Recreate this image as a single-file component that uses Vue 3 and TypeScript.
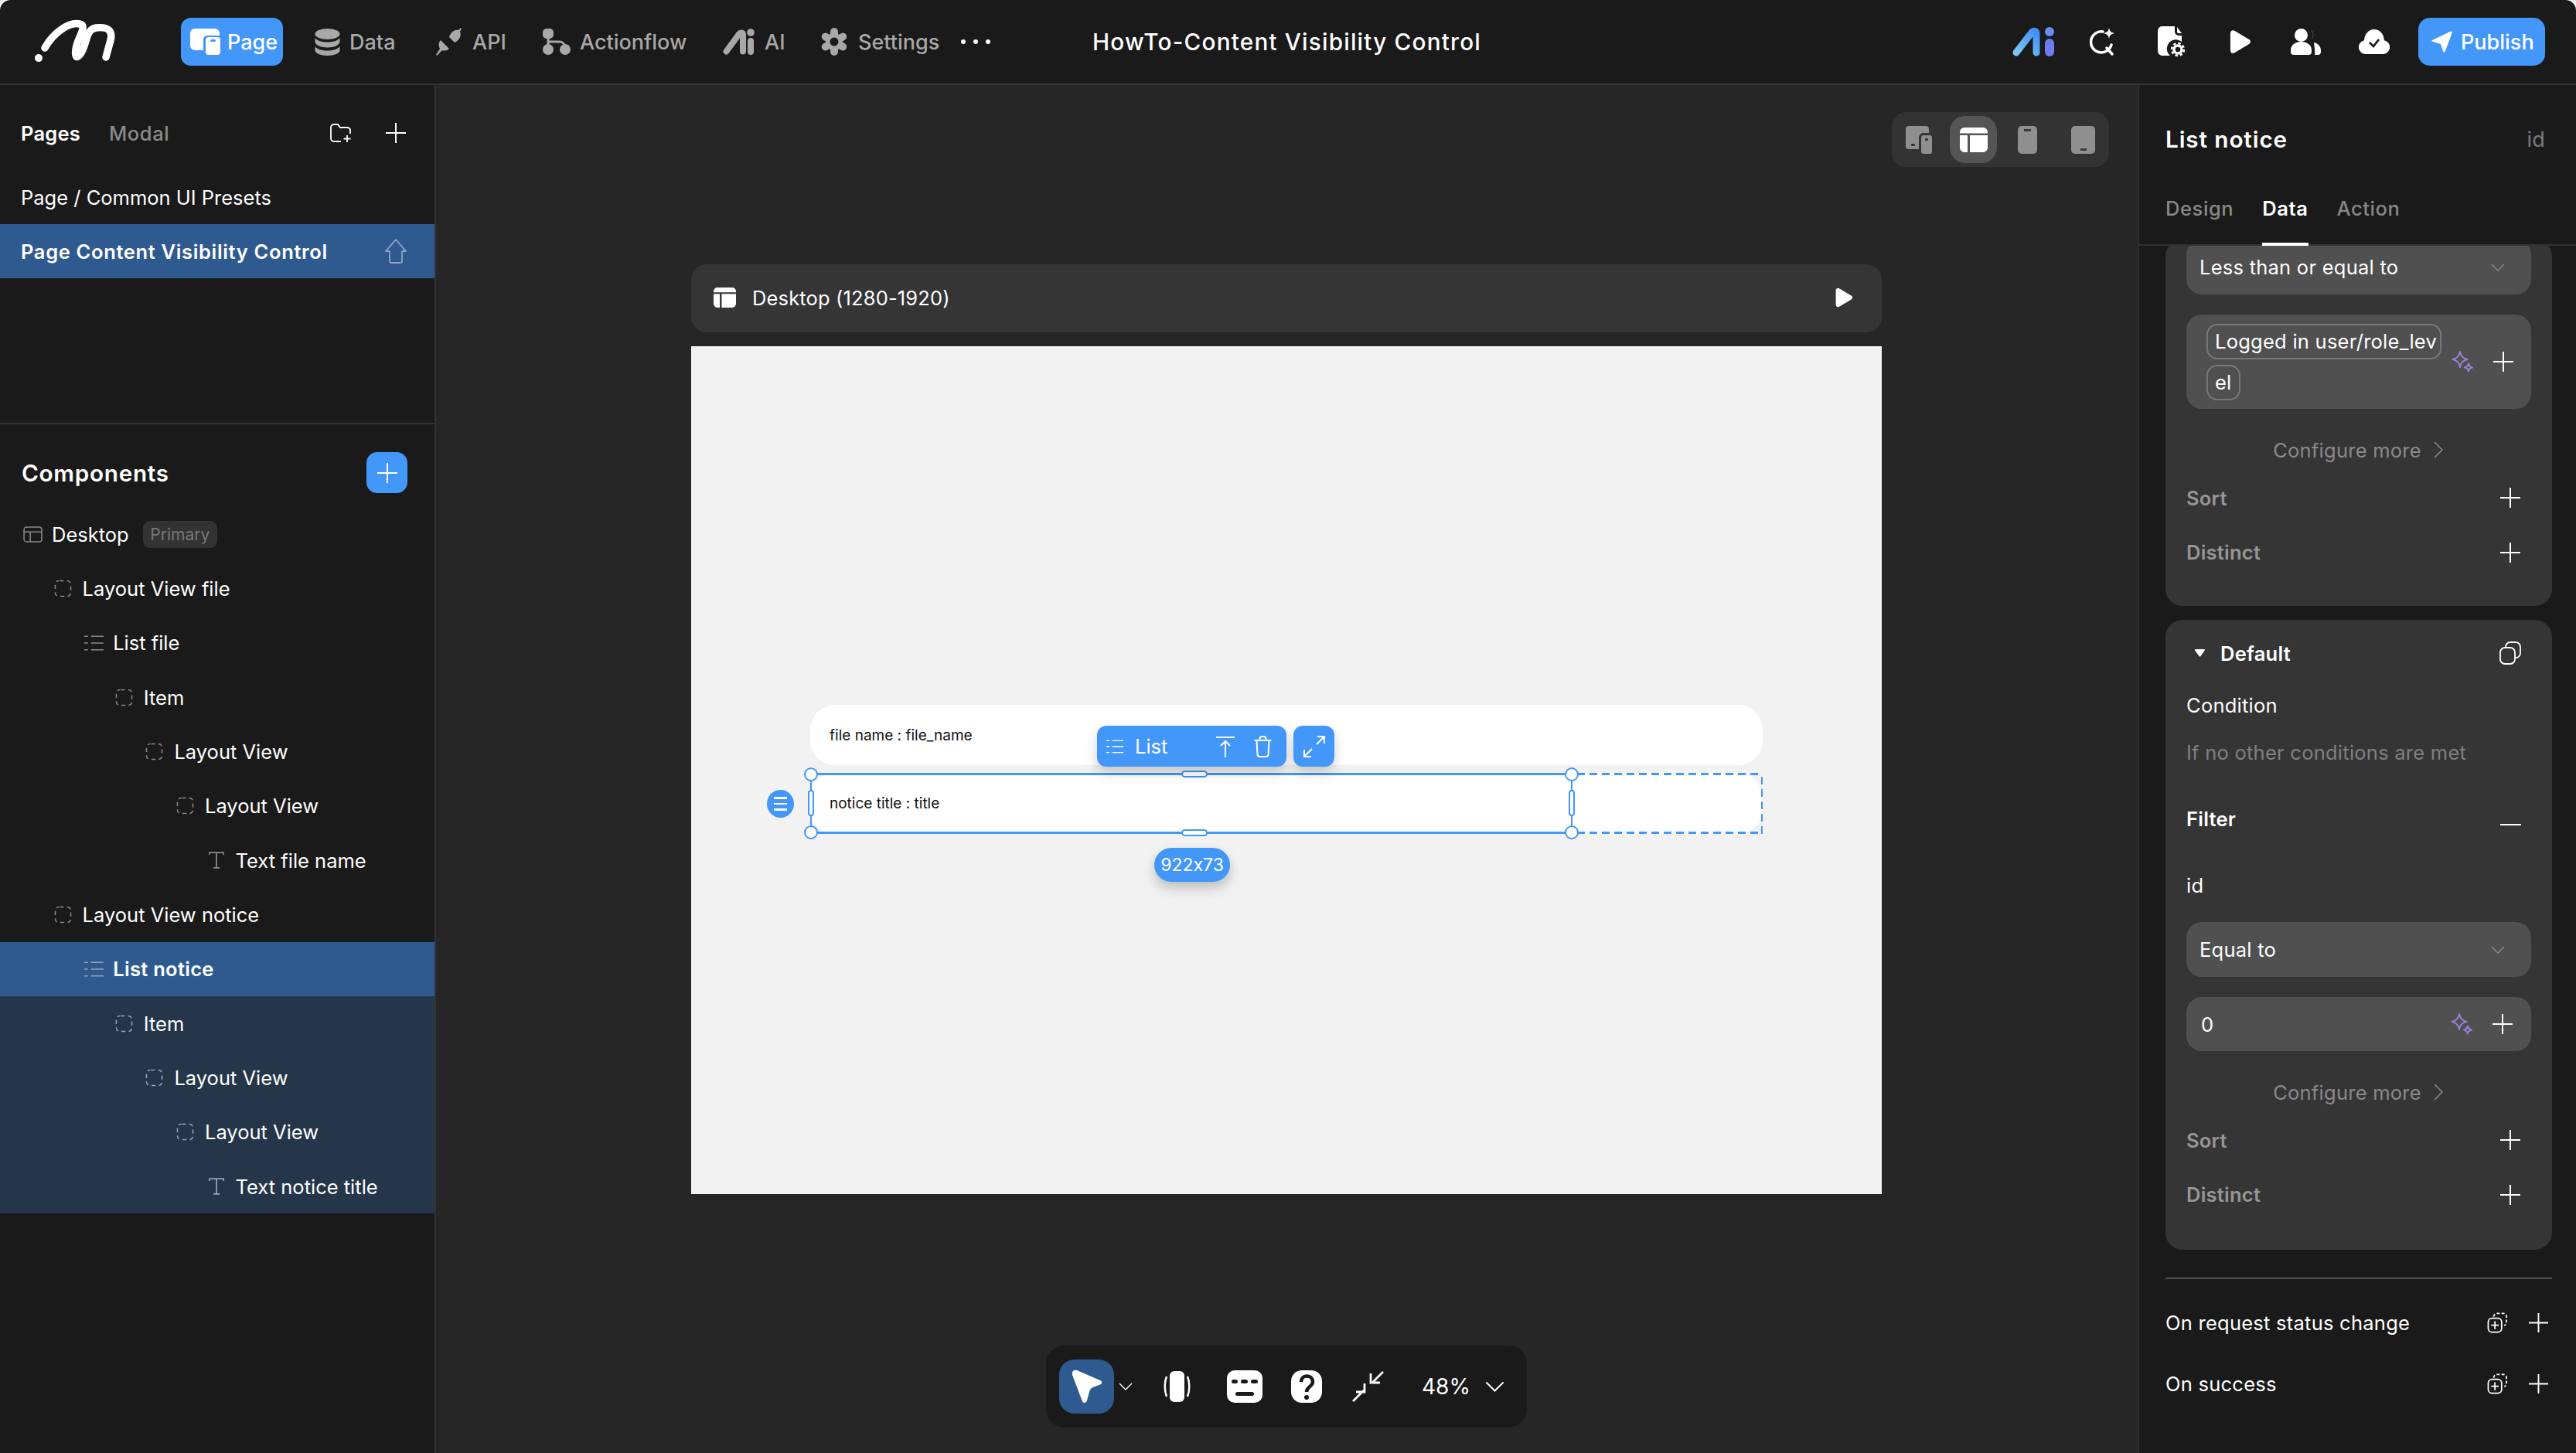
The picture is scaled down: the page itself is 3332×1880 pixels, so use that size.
<script setup lang="ts">
interface Node { label: string; level: number; icon: string; tone?: string; badge?: string }
const tree: Node[] = [
  { label: 'Desktop', level: 0, icon: 'i-frame', badge: 'Primary' },
  { label: 'Layout View file', level: 1, icon: 'i-dash' },
  { label: 'List file', level: 2, icon: 'i-list' },
  { label: 'Item', level: 3, icon: 'i-dash' },
  { label: 'Layout View', level: 4, icon: 'i-dash' },
  { label: 'Layout View', level: 5, icon: 'i-dash' },
  { label: 'Text file name', level: 6, icon: 'i-text' },
  { label: 'Layout View notice', level: 1, icon: 'i-dash' },
  { label: 'List notice', level: 2, icon: 'i-list', tone: 'active' },
  { label: 'Item', level: 3, icon: 'i-dash', tone: 'child' },
  { label: 'Layout View', level: 4, icon: 'i-dash', tone: 'child' },
  { label: 'Layout View', level: 5, icon: 'i-dash', tone: 'child' },
  { label: 'Text notice title', level: 6, icon: 'i-text', tone: 'child' },
]
const indent = (level: number) => ({ paddingLeft: `${30 + level * 39.6}px` })
</script>

<template>
  <div class="app">
    <svg class="sprite" aria-hidden="true">
      <defs>
        <linearGradient id="ai-a" gradientUnits="userSpaceOnUse" x1="5" y1="33" x2="31" y2="5">
          <stop offset="0" stop-color="#7cc8fb" />
          <stop offset="1" stop-color="#3f8ef0" />
        </linearGradient>
      </defs>
      <symbol id="i-dash" viewBox="0 0 24 24">
        <rect x="1.5" y="1.5" width="21" height="21" rx="5" fill="none" stroke="currentColor" stroke-width="1.6" stroke-dasharray="5.5 4.5" stroke-dashoffset="-1" />
      </symbol>
      <symbol id="i-list" viewBox="0 0 26 22">
        <path d="M0 2h5M9 2h17M0 11h5M9 11h17M0 20h5M9 20h17" fill="none" stroke="currentColor" stroke-width="1.6" />
      </symbol>
      <symbol id="i-text" viewBox="0 0 20 22">
        <path d="M1 4V1.2h18V4M10 1.2v19.6M6 20.8h8" fill="none" stroke="currentColor" stroke-width="1.8" />
      </symbol>
      <symbol id="i-frame" viewBox="0 0 26 22">
        <rect x="1" y="1" width="24" height="20" rx="3.5" fill="none" stroke="currentColor" stroke-width="1.6" />
        <path d="M1 7.5h24M9.5 7.5V21" fill="none" stroke="currentColor" stroke-width="1.6" />
      </symbol>
      <symbol id="i-plus" viewBox="0 0 28 28">
        <path d="M14 1v26M1 14h26" fill="none" stroke="currentColor" stroke-width="2" />
      </symbol>
      <symbol id="i-chev" viewBox="0 0 18 10">
        <path d="M1 1l8 8 8-8" fill="none" stroke="currentColor" stroke-width="1.4" />
      </symbol>
      <symbol id="i-right" viewBox="0 0 12 22">
        <path d="M1 1l10 10L1 21" fill="none" stroke="currentColor" stroke-width="1.5" />
      </symbol>
      <symbol id="i-spark" viewBox="0 0 28 28">
        <path d="M11 1c1.200 6 3.500 8.800 9.500 10-6 1.200-8.300 4-9.500 10-1.200-6-3.500-8.800-9.500-10C7.500 9.800 9.800 7 11 1z" fill="none" stroke="#9a80d6" stroke-width="2" stroke-linejoin="round" />
        <path d="M22 16.500c.6 3 1.800 4.300 5 5-3.200.7-4.400 2-5 5-.6-3-1.800-4.300-5-5 3.200-.7 4.400-2 5-5z" fill="none" stroke="#9a80d6" stroke-width="2" stroke-linejoin="round" />
      </symbol>
      <symbol id="i-addgroup" viewBox="0 0 28 28">
        <path d="M9 6V5.500A4 4 0 0 1 13 1.500h9a4 4 0 0 1 4 4v8a4 4 0 0 1-3 4" fill="none" stroke="currentColor" stroke-width="1.8" stroke-dasharray="4 2.500" />
        <rect x="1.500" y="8" width="18" height="18.500" rx="5" fill="none" stroke="currentColor" stroke-width="1.8" />
        <path d="M10.500 12v10.500M5.500 17.200h10" fill="none" stroke="currentColor" stroke-width="1.8" />
      </symbol>
      <symbol id="i-desk-solid" viewBox="0 0 36 32">
        <path d="M6 0h24a6 6 0 0 1 6 6v1.500H0V6a6 6 0 0 1 6-6zM0 10h10v22H6a6 6 0 0 1-6-6zM13 10h23v16a6 6 0 0 1-6 6H13z" fill="currentColor" />
      </symbol>
      <symbol id="i-play" viewBox="0 0 30 32">
        <path d="M2 5c0-4 3-5.500 6-3.500l19 11.500c2.500 1.500 2.500 4.500 0 6L8 30.500c-3 2-6 .5-6-3.500z" fill="currentColor" />
      </symbol>
    </svg>

    <header class="top">
      <div class="brand">
        <svg width="106" height="60" viewBox="45 24 106 60">
          <path d="M50 75v.1" fill="none" stroke="#fff" stroke-width="10" stroke-linecap="round" />
          <path d="M58 62C68 44 88 28 103 31c10 2-1 16-4 28-3 12-1 19 5 11 9-12 6-32 20-34 16-2 22 4 19 16l-6 22" fill="none" stroke="#fff" stroke-width="9.500" stroke-linecap="round" />
        </svg>
      </div>
      <nav class="nav">
        <div class="nav-item page">
          <svg width="39" height="34" viewBox="0 0 39 34">
            <path d="M6 0h26a6 6 0 0 1 6 6v3H22a5 5 0 0 0-5 5v14H6a6 6 0 0 1-6-6V6a6 6 0 0 1 6-6z" fill="#fff" />
            <rect x="20" y="11" width="19" height="23" rx="4" fill="#fff" />
            <rect x="26" y="14" width="7" height="3" rx="1.500" fill="#4397f9" />
          </svg>
          <span>Page</span>
        </div>
        <div class="nav-item">
          <svg width="33" height="35" viewBox="0 0 33 35">
            <ellipse cx="16.500" cy="7" rx="16" ry="7" fill="currentColor" />
            <path d="M.5 12c3 4 9 5.500 16 5.500S29.500 16 32.500 12v5c0 4-7 7.500-16 7.500S.5 21 .5 17z" fill="currentColor" />
            <path d="M.5 23c3 4 9 5.500 16 5.500S29.500 27 32.500 23v5c0 4-7 7-16 7S.5 32 .5 28z" fill="currentColor" />
          </svg>
          <span>Data</span>
        </div>
        <div class="nav-item">
          <svg width="36" height="36" viewBox="0 0 36 36">
            <path d="M18 12C20 5 26 2 30 3l3-3 1 1-2 4c2 4 0 11-7 14z" fill="currentColor" />
            <path d="M7 16l11 11c-3 3-7 3-9 2l-7 7-1-1 5-8C4 23 4 19 7 16z" fill="currentColor" />
          </svg>
          <span>API</span>
        </div>
        <div class="nav-item">
          <svg width="36" height="34" viewBox="0 0 36 34">
            <rect x="0" y="0" width="14" height="13" rx="5" fill="currentColor" />
            <circle cx="7" cy="27" r="7" fill="currentColor" />
            <circle cx="29" cy="27" r="7" fill="currentColor" />
            <path d="M7 12v10M7 17h15a6 6 0 0 1 6 5" fill="none" stroke="currentColor" stroke-width="3" />
          </svg>
          <span>Actionflow</span>
        </div>
        <div class="nav-item">
          <svg width="42" height="34" viewBox="0 0 42 34">
            <path d="M4.500 29.500L21 7c2-2.500 5-2 5 1v21.500" fill="none" stroke="currentColor" stroke-width="8" stroke-linecap="round" stroke-linejoin="round" />
            <circle cx="36" cy="5" r="4.800" fill="currentColor" />
            <rect x="32" y="12" width="8" height="22" rx="4" fill="currentColor" />
          </svg>
          <span>AI</span>
        </div>
        <div class="nav-item">
          <svg width="38" height="38" viewBox="0 0 38 38">
            <g fill="none" stroke="currentColor" stroke-width="10" stroke-linecap="round">
              <path d="M19 6v26" />
              <path d="M19 6v26" transform="rotate(60 19 19)" />
              <path d="M19 6v26" transform="rotate(120 19 19)" />
            </g>
            <circle cx="19" cy="19" r="11" fill="currentColor" />
            <circle cx="19" cy="19" r="5.500" fill="#1a1a1a" />
          </svg>
          <span>Settings</span>
        </div>
        <div class="dots"><i></i><i></i><i></i></div>
      </nav>
      <h1 class="title">HowTo-Content Visibility Control</h1>
      <div class="actions">
        <svg width="56" height="38" viewBox="0 0 56 38">
          <path d="M5 33L25 7c2.500-3 6-2 6 1.500V33" fill="none" stroke="url(#ai-a)" stroke-width="9" stroke-linecap="round" stroke-linejoin="round" />
          <circle cx="48" cy="6" r="6" fill="#6a8df2" />
          <rect x="42" y="15" width="12" height="23" rx="6" fill="#6f7bf0" />
        </svg>
        <svg width="34" height="36" viewBox="0 0 34 36">
          <path d="M17 5A13.500 13.500 0 1 0 28 22" fill="none" stroke="#fff" stroke-width="3.500" stroke-linecap="round" />
          <path d="M22 26l7 8" fill="none" stroke="#fff" stroke-width="3.500" stroke-linecap="round" />
          <path d="M25 0c.8 4.500 2.500 6 7 7-4.500 1-6.200 2.500-7 7-.8-4.500-2.500-6-7-7 4.500-1 6.200-2.500 7-7z" fill="#fff" />
        </svg>
        <svg width="35" height="40" viewBox="0 0 35 40">
          <path d="M6 0h16v7a5 5 0 0 0 5 5h4v8a11 11 0 0 0-15 18H6a6 6 0 0 1-6-6V6a6 6 0 0 1 6-6z" fill="#fff" />
          <path d="M25 1l6 8h-4a2 2 0 0 1-2-2z" fill="#fff" />
          <circle cx="26" cy="30" r="5" fill="none" stroke="#fff" stroke-width="3.500" />
          <circle cx="26" cy="30" r="8" fill="none" stroke="#fff" stroke-width="2.500" stroke-dasharray="3.500 2.780" />
        </svg>
        <svg class="play" width="29" height="32"><use href="#i-play" /></svg>
        <svg width="39" height="34" viewBox="0 0 39 34">
          <circle cx="13.500" cy="8.500" r="8.500" fill="#fff" />
          <path d="M0 28c0-7 6-11 13.500-11S27 21 27 28v2a4 4 0 0 1-4 4H4a4 4 0 0 1-4-4z" fill="#fff" />
          <path d="M24 1a8 8 0 0 1 5 7.500 8 8 0 0 1-5 7.500 8 8 0 0 0 0-15zM30 18c5 1 9 5 9 10v2a4 4 0 0 1-4 4h-4a8 8 0 0 0 0-4v-3c0-3-1-7-1-9z" fill="#fff" />
        </svg>
        <svg width="40" height="32" viewBox="0 0 40 32">
          <path d="M9 32a9 9 0 0 1-2-17.800C7.500 6 13 0 20 0s12.500 6 13 14.200A9 9 0 0 1 31 32z" fill="#fff" />
          <path d="M14 17l5 5 7-9" fill="none" stroke="#1a1a1a" stroke-width="2.800" />
        </svg>
        <div class="publish">
          <svg width="27" height="28" viewBox="0 0 27 28">
            <path d="M1 12L24 1c2-1 3 0 2.500 2L18 26c-.7 2-2.500 2-3 0l-3-9-10-3c-1.500-.5-2-1.500-1-2z" fill="#fff" />
          </svg>
          <span>Publish</span>
        </div>
      </div>
    </header>

    <div class="body">
      <aside class="left">
        <section class="pages">
          <div class="tabs">
            <b>Pages</b>
            <span>Modal</span>
            <svg class="folder" width="28" height="25" viewBox="0 0 28 25">
              <path d="M14 23H5a4 4 0 0 1-4-4V5a4 4 0 0 1 4-4h5l3 4h9a4 4 0 0 1 4 3v5" fill="none" stroke="#fff" stroke-width="1.800" />
              <path d="M22 15v9M17.500 19.500h9" fill="none" stroke="#fff" stroke-width="1.800" />
            </svg>
            <svg class="tab-plus" width="28" height="28"><use href="#i-plus" /></svg>
          </div>
          <div class="page-row">Page / Common UI Presets</div>
          <div class="page-row selected">
            <span>Page Content Visibility Control</span>
            <svg width="30" height="34" viewBox="0 0 30 34">
              <path d="M15 2L28 17h-5v13a2 2 0 0 1-2 2H9a2 2 0 0 1-2-2V17H2z" fill="none" stroke="#8ea6c6" stroke-width="1.800" stroke-linejoin="round" />
            </svg>
          </div>
        </section>
        <section class="components">
          <div class="comp-head">
            <h2>Components</h2>
            <div class="add"><svg width="28" height="28"><use href="#i-plus" /></svg></div>
          </div>
          <div v-for="(n, i) in tree" :key="i" class="row" :class="n.tone" :style="indent(n.level)">
            <span class="slot"><svg :class="n.icon"><use :href="'#' + n.icon" /></svg></span>
            <span class="lbl">{{ n.label }}</span>
            <span v-if="n.badge" class="badge">{{ n.badge }}</span>
          </div>
        </section>
      </aside>

      <main class="canvas">
        <div class="devices">
          <div class="dev">
            <svg width="34" height="36" viewBox="0 0 34 36">
              <path d="M4 0h22a4 4 0 0 1 4 4v5h-7a6 6 0 0 0-6 6v15H4a4 4 0 0 1-4-4V4a4 4 0 0 1 4-4z" fill="#8f8f8f" />
              <rect x="20" y="12" width="14" height="24" rx="3" fill="#8f8f8f" />
              <rect x="25" y="16" width="4" height="3" fill="#3a3a3a" />
              <rect x="7" y="23" width="5" height="3" fill="#3a3a3a" />
            </svg>
          </div>
          <div class="dev on"><svg class="white" width="36" height="32"><use href="#i-desk-solid" /></svg></div>
          <div class="dev">
            <svg width="25" height="36" viewBox="0 0 25 36">
              <rect width="25" height="36" rx="5" fill="#8f8f8f" />
              <rect x="8" y="4" width="9" height="3" fill="#3a3a3a" />
            </svg>
          </div>
          <div class="dev">
            <svg width="31" height="36" viewBox="0 0 31 36">
              <rect width="31" height="36" rx="5" fill="#8f8f8f" />
              <rect x="12" y="29" width="8" height="3" fill="#3a3a3a" />
            </svg>
          </div>
        </div>

        <div class="viewport">
          <svg class="white" width="29" height="26"><use href="#i-desk-solid" /></svg>
          <span>Desktop (1280-1920)</span>
          <svg class="vp-play" width="24" height="26"><use href="#i-play" /></svg>
        </div>

        <div class="board">
          <div class="card">file name : file_name</div>
          <div class="card second">
            notice title : title
            <div class="dashed"></div>
            <div class="sel">
              <i class="h c1"></i><i class="h c2"></i><i class="h c3"></i><i class="h c4"></i>
              <i class="m top"></i><i class="m bottom"></i><i class="s lft"></i><i class="s rgt"></i>
              <div class="drag"><b></b><b></b><b></b></div>
              <div class="tool">
                <div class="tool-main">
                  <svg class="tool-list" width="22" height="20"><use href="#i-list" /></svg>
                  <span>List</span>
                  <svg class="tool-up" width="28" height="28" viewBox="0 0 26 28">
                    <path d="M1 2h24M13 7v21M7 13l6-6 6 6" fill="none" stroke="#fff" stroke-width="2" />
                  </svg>
                  <svg width="25" height="28" viewBox="0 0 24 28">
                    <path d="M1 6h22M8 6V4a3 3 0 0 1 3-3h2a3 3 0 0 1 3 3v2M4 6l1 18a3 3 0 0 0 3 3h8a3 3 0 0 0 3-3l1-18" fill="none" stroke="#fff" stroke-width="2" />
                  </svg>
                </div>
                <div class="tool-exp">
                  <svg width="28" height="28" viewBox="0 0 28 28">
                    <path d="M17 11L27 1M18 1h9v9M11 17L1 27M10 27H1v-9" fill="none" stroke="#fff" stroke-width="2" />
                  </svg>
                </div>
              </div>
              <div class="size">922x73</div>
            </div>
          </div>
        </div>

        <div class="zoombar">
          <div class="cursor">
            <svg width="42" height="44" viewBox="0 0 42 44">
              <path d="M2 7C1 2 4 0 8 1l30 13c3 1.500 3 4 0 5.500l-8 3c-3 1-4.500 2.500-5.500 5L21 40c-1.500 4-5 4-6.500 0z" fill="#fff" />
            </svg>
          </div>
          <svg class="z-chev" width="18" height="10"><use href="#i-chev" /></svg>
          <svg class="z-a" width="35" height="42" viewBox="0 0 35 42">
            <rect x="8" y="1" width="19" height="40" rx="6" fill="#fff" />
            <path d="M4 8c-3 7-3 19 0 26M31 8c3 7 3 19 0 26" fill="none" stroke="#fff" stroke-width="2.500" />
          </svg>
          <svg class="z-b" width="46" height="42" viewBox="0 0 46 42">
            <rect width="46" height="42" rx="10" fill="#fff" />
            <rect x="6" y="12" width="8" height="5" rx="2.500" fill="#1a1a1a" />
            <rect x="18" y="12" width="9" height="5" rx="2.500" fill="#1a1a1a" />
            <rect x="31" y="12" width="9" height="5" rx="2.500" fill="#1a1a1a" />
            <rect x="11" y="28" width="24" height="5" rx="2.500" fill="#1a1a1a" />
          </svg>
          <svg class="z-c" width="40" height="42" viewBox="0 0 40 42">
            <rect width="40" height="42" rx="14" fill="#fff" />
            <path d="M13 15c0-10 15-10 15 0 0 6-8 6-8 13" fill="none" stroke="#1a1a1a" stroke-width="4.500" />
            <circle cx="20" cy="35" r="3" fill="#1a1a1a" />
          </svg>
          <svg class="z-d" width="41" height="40" viewBox="0 0 41 40">
            <path d="M40 1L26 15M24 3v12h12M1 39l14-14M5 27h11v-11" fill="none" stroke="#fff" stroke-width="2.800" />
          </svg>
          <span class="pct">48%</span>
          <svg class="z-pct" width="25" height="14"><use href="#i-chev" /></svg>
        </div>
      </main>

      <aside class="right">
        <div class="r-head">
          <div class="r-title"><b>List notice</b><span>id</span></div>
          <div class="r-tabs"><span>Design</span><span class="on">Data</span><span>Action</span></div>
        </div>
        <div class="r-scroll">
          <div class="panel first">
            <div class="select"><span>Less than or equal to</span><svg width="18" height="10"><use href="#i-chev" /></svg></div>
            <div class="input tall">
              <div class="tags">
                <span class="tag">Logged in user/role_lev</span>
                <span class="tag">el</span>
              </div>
              <svg class="sp" width="28" height="28"><use href="#i-spark" /></svg>
              <svg width="28" height="28"><use href="#i-plus" /></svg>
            </div>
            <div class="more"><span>Configure more</span><svg width="12" height="22"><use href="#i-right" /></svg></div>
            <div class="line dim"><b>Sort</b><svg width="28" height="28"><use href="#i-plus" /></svg></div>
            <div class="line dim"><b>Distinct</b><svg width="28" height="28"><use href="#i-plus" /></svg></div>
          </div>

          <div class="panel second-panel">
            <div class="line def">
              <span class="def-l"><svg width="13" height="10" viewBox="0 0 13 10"><path d="M1 0h11c1 0 1.200 1 .7 1.700L7.500 9c-.5.7-1.500.7-2 0L.3 1.700C-.2 1 0 0 1 0z" fill="#fff" /></svg><b>Default</b></span>
              <svg width="28" height="30" viewBox="0 0 28 30">
                <rect x="1" y="8" width="19" height="21" rx="6" fill="none" stroke="#fff" stroke-width="1.800" />
                <path d="M8 8V7a6 6 0 0 1 6-6h7a6 6 0 0 1 6 6v8a6 6 0 0 1-7 6" fill="none" stroke="#fff" stroke-width="1.800" />
              </svg>
            </div>
            <div class="cond">Condition</div>
            <div class="cond-note">If no other conditions are met</div>
            <div class="line filter"><b>Filter</b><i class="minus"></i></div>
            <div class="field">id</div>
            <div class="select"><span>Equal to</span><svg width="18" height="10"><use href="#i-chev" /></svg></div>
            <div class="input">
              <span class="val">0</span>
              <svg class="sp" width="28" height="28"><use href="#i-spark" /></svg>
              <svg width="28" height="28"><use href="#i-plus" /></svg>
            </div>
            <div class="more"><span>Configure more</span><svg width="12" height="22"><use href="#i-right" /></svg></div>
            <div class="line dim"><b>Sort</b><svg width="28" height="28"><use href="#i-plus" /></svg></div>
            <div class="line dim"><b>Distinct</b><svg width="28" height="28"><use href="#i-plus" /></svg></div>
          </div>

          <div class="events">
            <div class="event"><span>On request status change</span><svg class="grp" width="27" height="27"><use href="#i-addgroup" /></svg><svg width="27" height="27"><use href="#i-plus" /></svg></div>
            <div class="event"><span>On success</span><svg class="grp" width="27" height="27"><use href="#i-addgroup" /></svg><svg width="27" height="27"><use href="#i-plus" /></svg></div>
          </div>
        </div>
      </aside>
    </div>
  </div>
</template>

<style>
html, body { margin: 0; background: #f4f4f4; }
</style>

<style scoped>
.app {
  width: 3332px; height: 1880px; overflow: hidden; background: #1a1a1a; color: #fff;
  font-family: Inter, "Noto Sans", "Liberation Sans", sans-serif; font-size: 25.5px;
  font-feature-settings: "calt" 0;
  display: flex; flex-direction: column; position: relative;
  border-radius: 14px 14px 0 0;
}
.sprite { position: absolute; width: 0; height: 0; }
svg { display: block; flex: none; color: #fff; }

/* top bar */
.top { height: 108px; flex: none; display: flex; align-items: center; border-bottom: 2px solid #333; box-sizing: content-box; }
.brand { width: 234px; padding-left: 45px; box-sizing: border-box; flex: none; }
.nav { width: 1179px; flex: none; display: grid; grid-template-columns: 173px 156px 139px 233px 125px 183px auto; align-items: center; }
.nav-item { display: flex; align-items: center; gap: 12px; color: #a8a8a8; font-size: 27px; font-weight: 500; }
.nav-item svg { color: #a8a8a8; }
.nav-item.page { width: 132px; height: 62px; box-sizing: border-box; background: #4397f9; border-radius: 13px; color: #fff; padding-left: 12px; gap: 9px; }
.dots { display: flex; gap: 10px; }
.dots i { width: 6px; height: 6px; border-radius: 50%; background: #fff; }
.title { margin: 0; width: 600px; flex: none; font-size: 29.7px; font-weight: 500; white-space: nowrap; letter-spacing: 1.2px; }
.actions { margin-left: 590px; flex: none; display: grid; grid-template-columns: 100px 88px 92px 80px 88px 77px 164px; align-items: center; height: 62px; }
.publish { width: 164px; height: 62px; background: #4397f9; border-radius: 15px; display: flex; align-items: center; gap: 11px; padding-left: 17px; box-sizing: border-box; font-size: 27px; font-weight: 500; }

.body { flex: 1; display: flex; min-height: 0; }

/* left */
.left { width: 564px; flex: none; box-sizing: border-box; border-right: 2px solid #333; display: flex; flex-direction: column; }
.pages { height: 439px; flex: none; box-sizing: border-box; border-bottom: 2px solid #333; }
.tabs { height: 110px; padding-top: 14px; box-sizing: border-box; display: flex; align-items: center; padding-left: 27px; gap: 37px; }
.tabs b { font-weight: 600; letter-spacing: .2px; }
.tabs span { color: #8a8a8a; font-weight: 500; letter-spacing: .6px; }
.folder { margin-left: auto; }
.tab-plus { margin: 0 36px 0 6px; }
.page-row { height: 70px; display: flex; align-items: center; padding: 0 35px 0 27px; }
.page-row.selected { background: #2f5a8f; font-weight: 600; justify-content: space-between; letter-spacing: .65px; }
.components { flex: 1; }
.comp-head { height: 107px; display: flex; align-items: center; justify-content: space-between; padding: 18px 35px 0 28px; box-sizing: border-box; }
.comp-head h2 { margin: 0; font-size: 29.7px; font-weight: 600; letter-spacing: .7px; }
.add { width: 53px; height: 53px; border-radius: 14px; background: #4397f9; display: flex; align-items: center; justify-content: center; }
.row { height: 70.33px; display: flex; align-items: center; box-sizing: border-box; }
.row.active { background: #2f5a8f; font-weight: 600; letter-spacing: .3px; }
.row.child { background: #25364b; }
.slot { width: 37px; flex: none; color: #8a8a8a; }
.slot svg { color: #8a8a8a; }
.row.active .slot svg, .row.child .slot svg { color: #97a3b3; }
.i-dash { width: 23px; height: 23px; }
.i-list { width: 25px; height: 22px; }
.i-text { width: 20px; height: 22px; margin-left: 2px; }
.i-frame { width: 25px; height: 21px; }
.badge { margin-left: 18px; height: 35px; width: 96px; display: flex; align-items: center; justify-content: center; background: #333; border-radius: 9px; color: #777; font-size: 21px; }

/* canvas */
.canvas { flex: 1; position: relative; background: #262626; padding: 232px 0 0 330px; box-sizing: border-box; }
.devices { position: absolute; left: 1883px; top: 35px; width: 281px; height: 71px; background: #333; border-radius: 18px; display: grid; grid-template-columns: 14px 61px 61px 78px 66px; grid-template-areas: ". a b c d"; align-items: center; }
.dev { height: 61px; display: flex; align-items: center; justify-content: center; border-radius: 20px; }
.dev:nth-child(1) { grid-area: a; justify-content: flex-start; padding-left: 4px; }
.dev:nth-child(2) { grid-area: b; }
.dev:nth-child(3) { grid-area: c; }
.dev:nth-child(4) { grid-area: d; }
.dev.on { background: #555; width: 61px; }
.viewport { width: 1540px; height: 88px; background: #353535; border-radius: 20px; display: flex; align-items: center; padding: 0 37px 2px 29px; box-sizing: border-box; gap: 21px; margin-bottom: 18px; letter-spacing: .15px; }
.vp-play { margin-left: auto; }
.board { width: 1540px; height: 1097px; background: #f2f2f2; padding: 464px 154px 0; box-sizing: border-box; color: #111; }
.card { height: 78px; border-radius: 32px; background: #fff; display: flex; align-items: center; padding-left: 25px; font-size: 19px; margin-bottom: 10px; position: relative; }
.card.second { height: 79px; }
.dashed {
  position: absolute; inset: 0;
  background:
    repeating-linear-gradient(90deg, #4397f9 0 10px, transparent 10px 16px) top left / 100% 3px no-repeat,
    repeating-linear-gradient(90deg, #4397f9 0 10px, transparent 10px 16px) bottom left / 100% 3px no-repeat,
    repeating-linear-gradient(0deg, #4397f9 0 10px, transparent 10px 16px) top right / 2px 100% no-repeat;
}
.sel { position: absolute; left: 0; top: 0; width: 986px; height: 79px; border: solid #4397f9; border-width: 3px 2px; box-sizing: border-box; }
.h { position: absolute; width: 18px; height: 18px; border-radius: 50%; background: #fff; border: 2px solid #4397f9; box-sizing: border-box; }
.c1 { left: -10px; top: -10px; } .c2 { right: -10px; top: -10px; } .c3 { left: -10px; bottom: -10px; } .c4 { right: -10px; bottom: -10px; }
.m { position: absolute; left: 478px; width: 34px; height: 9px; background: #fff; border: 2px solid #4397f9; border-radius: 5px; box-sizing: border-box; }
.m.top { top: -6px; } .m.bottom { bottom: -6px; }
.s { position: absolute; top: 19px; width: 8px; height: 34px; background: #fff; border: 2px solid #4397f9; border-radius: 4px; box-sizing: border-box; }
.s.lft { left: -5px; } .s.rgt { right: -5px; }
.drag { position: absolute; left: -58px; top: 19px; width: 35px; height: 36px; border-radius: 50%; background: #4397f9; display: flex; flex-direction: column; align-items: center; justify-content: center; gap: 5px; }
.drag b { width: 17px; height: 2.500px; background: #fff; }
.tool { position: absolute; left: 369px; top: -64px; display: flex; gap: 9px; color: #fff; font-size: 25.5px; }
.tool-main { width: 245px; height: 53px; background: #4397f9; border-radius: 12px; display: flex; align-items: center; padding-left: 12px; box-sizing: border-box; box-shadow: 0 8px 16px rgba(0,0,0,.18); }
.tool-main span { margin-left: 15px; color: #fff; width: 103px; }
.tool-list { color: #fff; }
.tool-up { margin-right: 22px; }
.tool-exp { width: 53px; height: 53px; background: #4397f9; border-radius: 12px; display: flex; align-items: center; justify-content: center; box-shadow: 0 8px 16px rgba(0,0,0,.18); }
.size { position: absolute; left: 443px; top: 94px; width: 98px; height: 44px; border-radius: 22px; background: #4397f9; color: #fff; font-size: 23px; display: flex; align-items: center; justify-content: center; box-shadow: 0 8px 16px rgba(0,0,0,.22); }

/* bottom toolbar */
.zoombar { position: absolute; left: 789px; top: 1631px; width: 622px; height: 106px; background: #1a1a1a; border-radius: 24px; display: flex; align-items: center; }
.cursor { width: 71px; height: 70px; margin-left: 17px; border-radius: 20px; background: #2f5a8f; display: flex; align-items: center; justify-content: center; flex: none; }
.z-chev { margin-left: 6px; }
.z-a { margin-left: 40px; }
.z-b { margin-left: 47px; }
.z-c { margin-left: 37px; }
.z-d { margin-left: 39px; }
.pct { margin-left: 49px; width: 82px; font-size: 28px; color: #fff; }
.z-pct { width: 25px; }

/* right */
.right { width: 567px; flex: none; box-sizing: border-box; border-left: 2px solid #333; margin-left: -1px; display: flex; flex-direction: column; letter-spacing: .25px; }
.r-head { height: 208px; flex: none; box-sizing: border-box; border-bottom: 2px solid #333; padding: 0 40px 0 34px; }
.r-title { height: 140px; display: flex; align-items: center; justify-content: space-between; }
.r-title b { font-size: 29.7px; font-weight: 600; letter-spacing: .9px; }
.r-title span { color: #7a7a7a; font-size: 27px; }
.r-tabs { height: 68px; display: flex; gap: 37px; color: #888; font-weight: 500; position: relative; padding-top: 4px; box-sizing: border-box; letter-spacing: .6px; }
.r-tabs .on { color: #fff; font-weight: 600; height: 64px; border-bottom: 4px solid #fff; box-sizing: border-box; }
.r-scroll { flex: 1; overflow: hidden; padding: 0 31px 0 34px; }
.panel { background: #353535; border-radius: 22px; padding: 0 27px; }
.panel.first { margin-top: -8px; padding-bottom: 34px; }
.second-panel { margin-top: 18px; padding-top: 8px; padding-bottom: 36px; }
.select { height: 71px; background: #505050; border-radius: 20px; display: flex; align-items: center; justify-content: space-between; padding: 0 34px 0 17px; }
.select svg { color: #8d8d8d; }
.input { margin-top: 26px; height: 70px; background: #505050; border-radius: 20px; display: flex; align-items: center; padding: 0 23px 0 19px; }
.input.tall { height: 122px; padding-left: 26px; }
.tags { width: 317px; display: flex; flex-wrap: wrap; gap: 7px; flex: none; }
.tag { height: 46px; padding: 0 9px; display: flex; align-items: center; border: 2px solid #777; border-radius: 14px; box-sizing: border-box; white-space: nowrap; max-width: 304px; overflow: hidden; }
.sp { margin-left: auto; margin-right: 25px; }
.input.tall .sp { margin-left: 0; }
.val { font-size: 25.5px; }
.more { height: 54px; margin-top: 26px; display: flex; align-items: center; justify-content: center; gap: 16px; color: #8a8a8a; padding-right: 2px; }
.more svg { color: #8a8a8a; }
.line { height: 70.500px; display: flex; align-items: center; justify-content: space-between; padding-right: 13px; }
.line b { font-weight: 600; }
.line.dim b { color: #969696; }
.def { height: 70px; }
.def-l { display: flex; align-items: center; gap: 20px; padding-left: 11px; }
.cond { height: 64px; display: flex; align-items: center; }
.cond-note { height: 58px; display: flex; align-items: center; color: #808080; }
.filter { margin-top: 22px; height: 70px; }
.minus { width: 27px; height: 2px; background: #fff; margin-top: 16px; }
.field { height: 99px; padding-top: 3px; box-sizing: border-box; display: flex; align-items: center; }
.events { margin-top: 36px; border-top: 2px solid #505050; padding-top: 17px; }
.event { height: 79px; display: flex; align-items: center; }
.event span { flex: 1; }
.grp { margin-right: 26px; }
.event svg:last-child { margin-right: 4px; }
</style>
